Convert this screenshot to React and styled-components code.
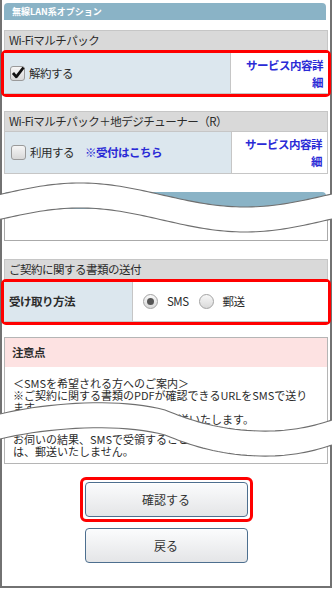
import styled, { createGlobalStyle } from "styled-components";

const GlobalStyle = createGlobalStyle`
  html, body {
    margin: 0;
    padding: 0;
    background: #fff;
  }
  body {
    font-family: "Noto Sans CJK JP", "Noto Sans", sans-serif;
    color: #333;
  }
`;

// torn edges used by the page breaks, as point lists
const sineEdge = (mid) => {
  const pts = [];
  for (let x = 0; x <= 332; x += 4) {
    const y = mid - 12 * Math.cos((2 * Math.PI * (x - 80)) / 330);
    pts.push([x, +y.toFixed(2)]);
  }
  return pts;
};

const cubic = (a, b, c, d, t) =>
  (1 - t) ** 3 * a + 3 * (1 - t) ** 2 * t * b + 3 * (1 - t) * t ** 2 * c + t ** 3 * d;

const curveEdge = (y) => {
  const segs = [
    [[0, y], [50, y - 12], [120, y - 16], [165, y - 4]],
    [[165, y - 4], [185, y + 4], [215, y + 16], [260, y + 17]],
    [[260, y + 17], [295, y + 18], [320, y + 10], [332, y + 6]],
  ];
  const pts = [];
  segs.forEach((s, i) => {
    for (let k = i ? 1 : 0; k <= 20; k++) {
      const t = k / 20;
      pts.push([
        +cubic(s[0][0], s[1][0], s[2][0], s[3][0], t).toFixed(2),
        +cubic(s[0][1], s[1][1], s[2][1], s[3][1], t).toFixed(2),
      ]);
    }
  });
  return pts;
};

const toPath = (pts) => pts.map(([x, y], i) => `${i ? "L" : "M"}${x} ${y}`).join(" ");

const PageBreak = ({ top, height, upper, gap = 25, edge = sineEdge }) => {
  const a = edge(upper);
  const b = edge(upper + gap);
  const fill =
    toPath(a) +
    " " +
    [...b]
      .reverse()
      .map(([x, y]) => `L${x} ${y}`)
      .join(" ") +
    " Z";
  return (
    <BreakSvg $top={top} width="332" height={height} viewBox={`0 0 332 ${height}`}>
      <path d={fill} fill="#fff" />
      <path d={toPath(a)} fill="none" stroke="#6f6f6f" strokeWidth="1.1" />
      <path d={toPath(b)} fill="none" stroke="#6f6f6f" strokeWidth="1.1" />
    </BreakSvg>
  );
};

const CheckBox = ({ checked }) => (
  <Box>
    {checked && (
      <svg width="16" height="16" viewBox="0 0 16 16">
        <path d="M3 8 L6.3 11.8 L13.5 2.5" fill="none" stroke="#111" strokeWidth="2.8" strokeLinejoin="round" />
      </svg>
    )}
  </Box>
);

const Radio = ({ checked }) => <RadioDot $checked={checked} />;

const App = () => {
  return (
    <>
      <GlobalStyle />
      <Frame>
        <OptionBar>無線LAN系オプション</OptionBar>

        <Section $gap={10}>
          <SectionHeader>Wi-Fiマルチパック</SectionHeader>
          <Highlight>
            <Row $cols="227px 1fr" $height={41}>
              <LabelCell>
                <CheckBox checked />
                <Text>解約する</Text>
              </LabelCell>
              <LinkCell>
                <Link>サービス内容詳細</Link>
              </LinkCell>
            </Row>
          </Highlight>
        </Section>

        <Section $gap={14}>
          <SectionHeader>Wi-Fiマルチパック＋地デジチューナー（R）</SectionHeader>
          <Row $cols="227px 1fr" $height={42} $bordered>
            <LabelCell>
              <CheckBox />
              <Text>利用する</Text>
              <Link $inline>※受付はこちら</Link>
            </LabelCell>
            <LinkCell>
              <Link>サービス内容詳細</Link>
            </LinkCell>
          </Row>
        </Section>

        <Section $gap={18}>
          <OptionBar>その他</OptionBar>
          <EmptyBox />
        </Section>

        <Section $gap={18}>
          <SectionHeader>ご契約に関する書類の送付</SectionHeader>
          <Highlight>
            <Row $cols="129px 1fr" $height={40}>
              <LabelCell $pad={5}>
                <Label>受け取り方法</Label>
              </LabelCell>
              <RadioCell>
                <Radio checked />
                <Text>SMS</Text>
                <Radio />
                <Text>郵送</Text>
              </RadioCell>
            </Row>
          </Highlight>
        </Section>

        <Notice>
          <NoticeHeader>注意点</NoticeHeader>
          <NoticeBody>
            <Para>
              ＜SMSを希望される方へのご案内＞
              <br />
              ※ご契約に関する書類のPDFが確認できるURLをSMSで送り
              <br />
              ます。
              <br />
              SMSでの受領が困難な場合には郵送いたします。
            </Para>
            <Para $gap={8}>
              お伺いの結果、SMSで受領することが可能なお客さまに
              <br />
              は、郵送いたしません。
            </Para>
          </NoticeBody>
        </Notice>

        <Buttons>
          <ButtonHighlight>
            <Button>確認する</Button>
          </ButtonHighlight>
          <Button $gap={6}>戻る</Button>
        </Buttons>

        <PageBreak top={168} height={72} upper={27} />
        <PageBreak top={392} height={72} upper={22} edge={curveEdge} />
      </Frame>
    </>
  );
};

const Frame = styled.div`
  position: relative;
  box-sizing: border-box;
  width: 332px;
  height: 588px;
  padding: 3px 2px 0;
  border: 2px solid #727272;
  border-top: none;
  background: #fff;
`;

const BreakSvg = styled.svg`
  position: absolute;
  left: -2px;
  top: ${(p) => p.$top}px;
  display: block;
`;

const OptionBar = styled.div`
  box-sizing: border-box;
  width: 322px;
  height: 17px;
  padding-left: 8px;
  border-radius: 4px 4px 0 0;
  background: #8ab3c6;
  color: #fff;
  font-size: 9px;
  font-weight: 700;
  line-height: 17px;
`;

const Section = styled.div`
  margin-top: ${(p) => p.$gap}px;
`;

const SectionHeader = styled.div`
  box-sizing: border-box;
  height: 21px;
  padding-left: 4px;
  border: 1px solid #c6c6c6;
  background: #d9d9d9;
  font-size: 11.5px;
  letter-spacing: -0.5px;
  line-height: 19px;
  color: #2b2b2b;
`;

const Highlight = styled.div`
  margin: -1px -3px 0;
  border: 3px solid #ff0000;
  border-radius: 5px;
`;

const Row = styled.div`
  box-sizing: border-box;
  display: grid;
  grid-template-columns: ${(p) => p.$cols};
  height: ${(p) => p.$height}px;
  border: ${(p) => (p.$bordered ? "1px solid #c6c6c6" : "none")};
  border-top: none;
  border-bottom: 1px solid #c6c6c6;
  font-size: 11.5px;
  line-height: 17px;
`;

const LabelCell = styled.div`
  display: flex;
  align-items: center;
  gap: 4px;
  padding-left: ${(p) => p.$pad ?? 6}px;
  background: #dce7ee;
  border-right: 1px solid #c6c6c6;
`;

const LinkCell = styled.div`
  padding: 4px 5px 0 8px;
  text-align: right;
  background: #fff;
`;

const RadioCell = styled.div`
  display: flex;
  align-items: center;
  gap: 9px;
  padding-left: 10px;
  background: #fff;
`;

const Text = styled.span`
  letter-spacing: -0.5px;
  color: #2b2b2b;
  margin-right: 1px;
`;

const Label = styled.span`
  letter-spacing: -0.5px;
  font-weight: 700;
  color: #2b2b2b;
`;

const Link = styled.span`
  letter-spacing: -0.5px;
  font-weight: 700;
  color: #2a2ad6;
  margin-left: ${(p) => (p.$inline ? "6px" : "0")};
`;

const Box = styled.span`
  position: relative;
  box-sizing: border-box;
  width: 15px;
  height: 15px;
  border: 1px solid #9a9a9a;
  border-radius: 3px;
  background: linear-gradient(#f6f6f6, #d8d8d8);
  svg {
    position: absolute;
    left: -1px;
    top: -2px;
  }
`;

const RadioDot = styled.span`
  position: relative;
  box-sizing: border-box;
  width: 15px;
  height: 15px;
  border: 1px solid #a3a3a3;
  border-radius: 50%;
  background: linear-gradient(#f8f8f8, #d9d9d9);
  &::after {
    content: "";
    position: absolute;
    left: 3px;
    top: 3px;
    width: 7px;
    height: 7px;
    border-radius: 50%;
    background: #555;
    display: ${(p) => (p.$checked ? "block" : "none")};
  }
`;

const EmptyBox = styled.div`
  box-sizing: border-box;
  height: 32px;
  border: 1px solid #aaa;
  border-top: none;
`;

const Notice = styled.div`
  box-sizing: border-box;
  margin-top: 12px;
  border: 1px solid #b5b5b5;
`;

const NoticeHeader = styled.div`
  height: 29px;
  padding-left: 7px;
  background: #fde2e2;
  font-size: 11.5px;
  font-weight: 700;
  letter-spacing: -0.5px;
  line-height: 29px;
  color: #2b2b2b;
`;

const NoticeBody = styled.div`
  padding: 10px 0 6px 8px;
  font-size: 11px;
  line-height: 12px;
  white-space: nowrap;
  overflow: hidden;
  color: #2b2b2b;
`;

const Para = styled.p`
  margin: ${(p) => p.$gap ?? 0}px 0 0;
`;

const Buttons = styled.div`
  display: flex;
  flex-direction: column;
  align-items: center;
  margin-top: 13px;
`;

const ButtonHighlight = styled.div`
  padding: 2px;
  border: 3px solid #ff0000;
  border-radius: 6px;
`;

const Button = styled.button`
  box-sizing: border-box;
  width: 163px;
  height: 35px;
  margin-top: ${(p) => p.$gap ?? 0}px;
  border: 1px solid #4d6f8f;
  border-radius: 4px;
  background: linear-gradient(#fbfcfd, #e4e5e7);
  box-shadow: inset 0 1px 0 #fff;
  font-family: "Noto Sans CJK JP", sans-serif;
  font-size: 12px;
  color: #333;
  cursor: pointer;
`;

export default App;
